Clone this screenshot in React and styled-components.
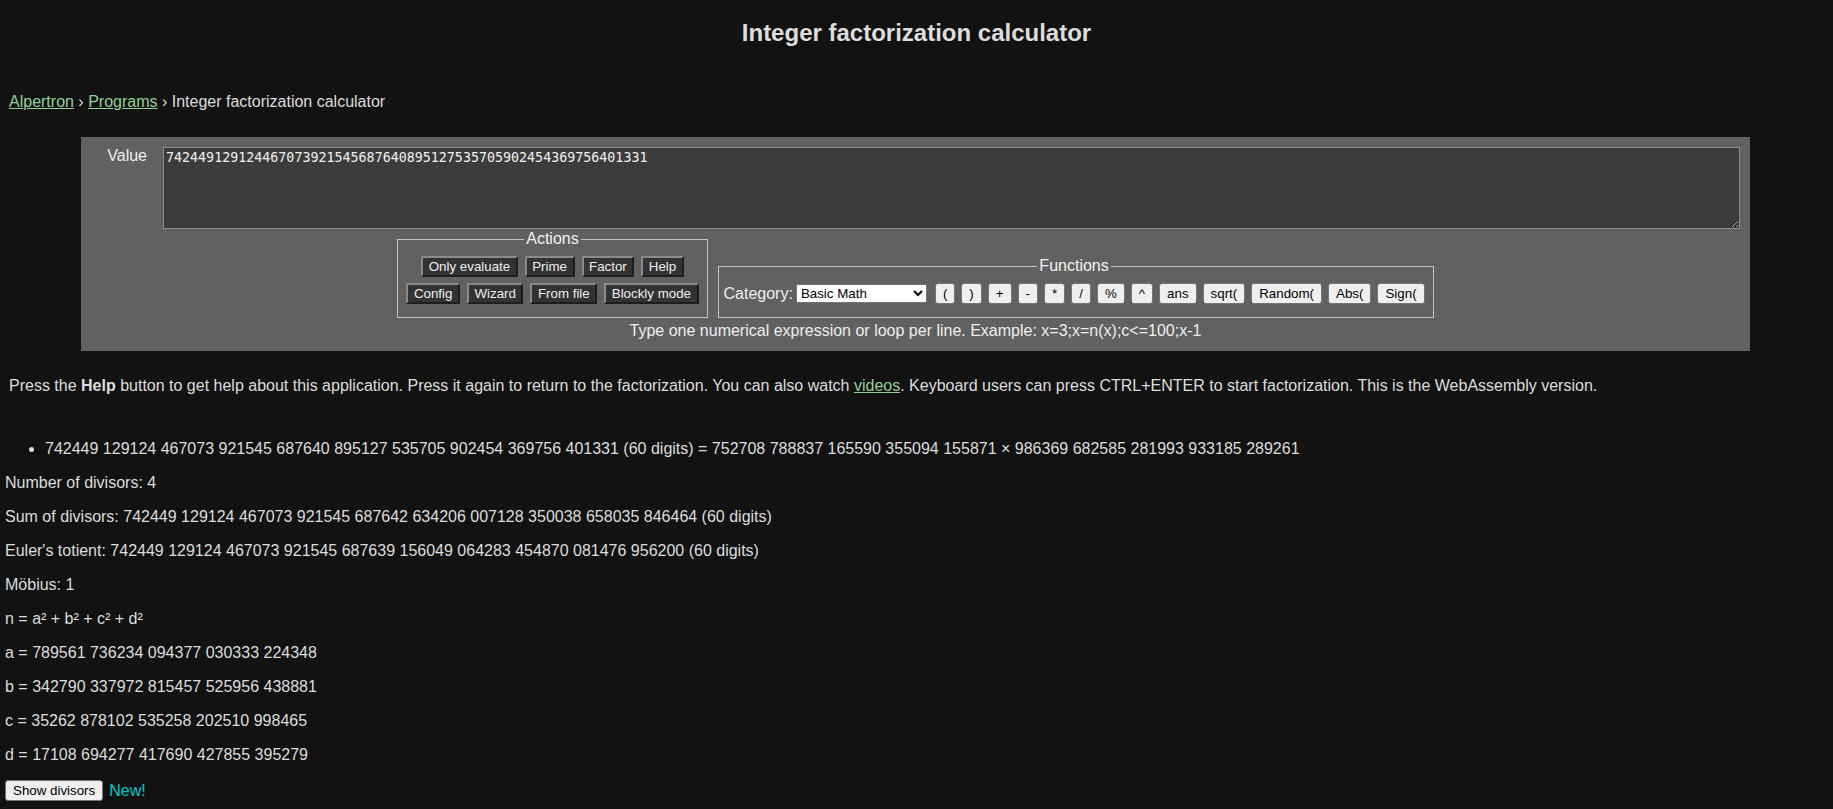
import React from 'react';
import styled, { createGlobalStyle } from 'styled-components';

const GlobalStyle = createGlobalStyle`
  body {
    margin: 0;
    background: #121212;
    color: #dddddd;
    font-family: "Liberation Sans", Arial, sans-serif;
    font-size: 16px;
  }
`

const Page = styled.div`
  padding: 0 5px 8px;
`

const Title = styled.h1`
  margin: 19px 0 0;
  font-size: 24px;
  line-height: 28px;
  text-align: center;
  color: #dddddd;
`

const Breadcrumb = styled.nav`
  margin-top: 46px;
  padding-left: 4px;
`

const Link = styled.a`
  color: #93d193;
  text-decoration: underline;
`

const Panel = styled.div`
  margin: 26px 78px 0 76px;
  padding: 10px 0 11px;
  background: #616161;
  display: flex;
  flex-direction: column;
`

const InputRow = styled.div`
  display: grid;
  grid-template-columns: 66px 1fr;
  column-gap: 16px;
  padding-right: 10px;
`

const Label = styled.label`
  text-align: right;
  color: #eeeeee;
`

const ValueBox = styled.textarea`
  box-sizing: border-box;
  height: 82px;
  width: 100%;
  margin: 0;
  padding: 2px;
  background: #3c3c3c;
  border: 1px solid #8c8c8c;
  color: #f0f0f0;
  font-family: "DejaVu Sans Mono", monospace;
  font-size: 13.33px;
  outline: none;
`

const Controls = styled.div`
  margin-top: 1px;
  display: flex;
  justify-content: center;
  align-items: flex-end;
  gap: 10px;
`

const Group = styled.fieldset`
  margin: 0;
  padding: ${p => p.$compact ? '8px 8px 13px 5px' : '8px 8px 13px'};
  border: 1px solid #c4c4c4;
  display: flex;
  flex-direction: column;
  gap: 6px;
`

const Legend = styled.legend`
  margin: 0 auto;
  padding: 0 2px;
  color: #f2f2f2;
  font-size: 16px;
`

const ButtonRow = styled.div`
  display: flex;
  justify-content: center;
  align-items: center;
  gap: 7px;
`

const DarkButton = styled.button`
  padding: 1px 5.5px;
  background: #333333;
  color: #eeeeee;
  border-width: 2px;
  border-style: solid;
  border-color: #8a8a8a #1e1e1e #1e1e1e #8a8a8a;
  font-family: "Liberation Sans", Arial, sans-serif;
  font-size: 13.33px;
  line-height: 15px;
`

const FuncRow = styled.div`
  display: flex;
  align-items: center;
  gap: 6px;
`

const CategoryLabel = styled.label`
  color: #eeeeee;
  margin-right: -3px;
`

const CategorySelect = styled.select`
  width: 131px;
  margin-right: 2px;
  font-family: "Liberation Sans", Arial, sans-serif;
  font-size: 13.33px;
`

const LightButton = styled.button`
  padding: 2px 7px;
  background: #efefef;
  color: #000000;
  border: 1px solid #767676;
  border-radius: 3px;
  font-family: "Liberation Sans", Arial, sans-serif;
  font-size: 13.33px;
  line-height: 15px;
`

const Hint = styled.div`
  margin-top: 4px;
  text-align: center;
  color: #eeeeee;
`

const Intro = styled.p`
  margin: 26px 0 16px;
  padding-left: 4px;
`

const Results = styled.ul`
  margin: 45px 0 16px;
  padding-left: 40px;
`

const Line = styled.p`
  margin: 16px 0;
`

const Footer = styled.div`
  margin-top: 16px;
  display: flex;
  align-items: center;
  gap: 6px;
`

const NewTag = styled.span`
  color: #00cccc;
`

const actionRows = [
  ['Only evaluate', 'Prime', 'Factor', 'Help'],
  ['Config', 'Wizard', 'From file', 'Blockly mode'],
]

const funcs = ['(', ')', '+', '-', '*', '/', '%', '^', 'ans', 'sqrt(', 'Random(', 'Abs(', 'Sign(']

const lines = [
  'Number of divisors: 4',
  'Sum of divisors: 742449 129124 467073 921545 687642 634206 007128 350038 658035 846464 (60 digits)',
  "Euler's totient: 742449 129124 467073 921545 687639 156049 064283 454870 081476 956200 (60 digits)",
  'Möbius: 1',
  'n = a² + b² + c² + d²',
  'a = 789561 736234 094377 030333 224348',
  'b = 342790 337972 815457 525956 438881',
  'c = 35262 878102 535258 202510 998465',
  'd = 17108 694277 417690 427855 395279',
]

export default function App() {
  return (
    <>
      <GlobalStyle />
      <Page>
        <Title>Integer factorization calculator</Title>
        <Breadcrumb>
          <Link href="#">Alpertron</Link> › <Link href="#">Programs</Link> › Integer factorization calculator
        </Breadcrumb>

        <Panel>
          <InputRow>
            <Label htmlFor="value">Value</Label>
            <ValueBox id="value" defaultValue="742449129124467073921545687640895127535705902454369756401331" />
          </InputRow>
          <Controls>
            <Group>
              <Legend>Actions</Legend>
              {actionRows.map((row, i) => (
                <ButtonRow key={i}>
                  {row.map(b => <DarkButton key={b}>{b}</DarkButton>)}
                </ButtonRow>
              ))}
            </Group>
            <Group $compact>
              <Legend>Functions</Legend>
              <FuncRow>
                <CategoryLabel htmlFor="cat">Category:</CategoryLabel>
                <CategorySelect id="cat" defaultValue="basic">
                  <option value="basic">Basic Math</option>
                </CategorySelect>
                {funcs.map(f => <LightButton key={f}>{f}</LightButton>)}
              </FuncRow>
            </Group>
          </Controls>
          <Hint>Type one numerical expression or loop per line. Example: x=3;x=n(x);c&lt;=100;x-1</Hint>
        </Panel>

        <Intro>
          Press the <b>Help</b> button to get help about this application. Press it again to return to the
          factorization. You can also watch <Link href="#">videos</Link>. Keyboard users can press CTRL+ENTER to
          start factorization. This is the WebAssembly version.
        </Intro>

        <Results>
          <li>742449 129124 467073 921545 687640 895127 535705 902454 369756 401331 (60 digits) = 752708 788837 165590 355094 155871 × 986369 682585 281993 933185 289261</li>
        </Results>

        {lines.map(l => <Line key={l}>{l}</Line>)}

        <Footer>
          <LightButton>Show divisors</LightButton>
          <NewTag>New!</NewTag>
        </Footer>
      </Page>
    </>
  )
}
